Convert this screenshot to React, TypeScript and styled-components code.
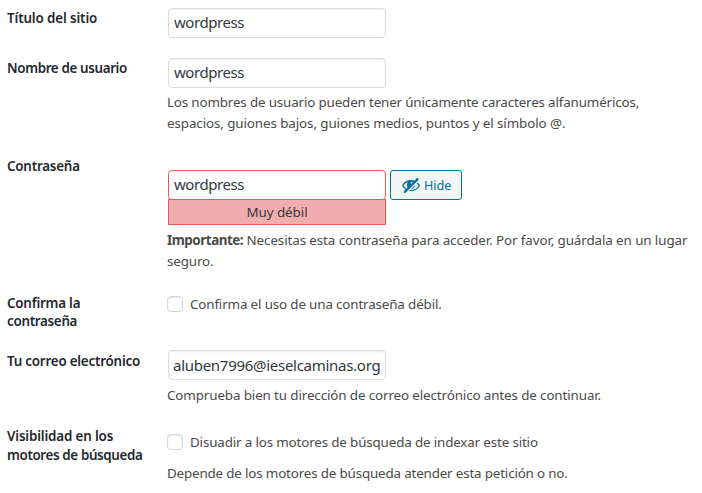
import React from "react";
import styled, { createGlobalStyle } from "styled-components";

const GlobalStyle = createGlobalStyle`
  * { box-sizing: border-box; }
  body {
    margin: 0;
    background: #fff;
    color: #4a4a4a;
    font: 13.4px/21px "Noto Sans", "Open Sans", sans-serif;
    overflow: hidden;
  }
`;

const FormTable = styled.form`
  width: 702px;
  height: 493px;
  display: grid;
  grid-template-rows: 50px 98px 137px 58px 75px 75px;
`;

const Row = styled.div`
  display: grid;
  grid-template-columns: 160px 1fr;
  padding-left: 7px;
`;

const Heading = styled.div<{ $leading?: number }>`
  padding-top: 9px;
  color: #23282d;
  font-weight: 600;
  line-height: ${(p) => p.$leading ?? 18}px;
`;

const Field = styled.div<{ $top?: number }>`
  padding-top: ${(p) => p.$top ?? 8}px;
`;

const Line = styled.div<{ $spacing?: number }>`
  letter-spacing: ${(p) => p.$spacing ?? 0}px;
  white-space: nowrap;
`;

const Spaced = styled.span<{ $spacing: number }>`
  letter-spacing: ${(p) => p.$spacing}px;
  white-space: nowrap;
`;

const Input = styled.input<{ $weak?: boolean; $spacing?: number; $inset?: number; $lift?: number }>`
  display: block;
  width: 218px;
  height: 30px;
  margin: 0 0 0 1px;
  padding: 0 0 ${(p) => p.$lift ?? 2}px ${(p) => p.$inset ?? 5}px;
  border: 1px solid ${(p) => (p.$weak ? "#e35b5b" : "#ddd")};
  border-radius: 4px;
  background: #fff;
  box-shadow: ${(p) => (p.$weak ? "none" : "inset 0 1px 2px rgba(0, 0, 0, 0.07)")};
  color: #32373c;
  font: 15px "Noto Sans", "Open Sans", sans-serif;
  letter-spacing: ${(p) => p.$spacing ?? -0.44}px;
  outline: none;
`;

const Description = styled.div<{ $gap?: number }>`
  margin-top: ${(p) => p.$gap ?? 4}px;
`;

const PasswordRow = styled.div`
  display: flex;
  gap: 4px;
`;

const Strength = styled.div`
  width: 218px;
  height: 26px;
  margin: -1px 0 0 1px;
  border: 1px solid #e35b5b;
  background: #f1adad;
  color: #32373c;
  line-height: 24px;
  text-align: center;
`;

const HideButton = styled.button`
  width: 72px;
  height: 30px;
  display: flex;
  align-items: center;
  gap: 3px;
  padding: 0 0 0 10px;
  border: 1px solid #0071a1;
  border-radius: 3px;
  background: #f3f5f6;
  color: #0071a1;
  font: 12.6px "Noto Sans", "Open Sans", sans-serif;
`;

const CheckLabel = styled.label`
  display: flex;
  align-items: center;
  height: 21px;
  gap: 7px;
`;

const CheckText = styled(Spaced)`
  padding-top: 2px;
`;

const Checkbox = styled.input`
  appearance: none;
  flex: none;
  width: 16px;
  height: 16px;
  margin: 0;
  border: 1px solid #d5d5d5;
  border-radius: 4px;
  background: #fff;
  box-shadow: inset 0 1px 2px rgba(0, 0, 0, 0.1);
`;

const HiddenIcon = () => (
  <svg width="20" height="20" viewBox="0 0 20 20" fill="currentColor" aria-hidden="true">
    <path d="M17.2 3.3l.16.17c.39.39.39 1.02 0 1.41L4.55 17.7c-.39.39-1.03.39-1.41 0l-.17-.17c-.39-.39-.39-1.02 0-1.41l1.59-1.6c-1.57-1-2.76-2.3-3.56-3.93.81-1.65 2.03-2.98 3.64-3.99S8.04 5.09 10 5.09c1.2 0 2.33.21 3.4.6l2.38-2.39c.39-.39 1.03-.39 1.42 0zm-7.09 4.01c-.23.25-.34.54-.34.88 0 .31.12.58.31.81l1.8-1.79c-.13-.12-.28-.21-.45-.26-.11-.01-.28-.03-.49-.04-.33.03-.6.16-.83.4zM2.4 10.59c.69 1.23 1.71 2.25 3.05 3.05l1.28-1.28c-.51-.69-.77-1.47-.77-2.36 0-1.06.36-1.98 1.09-2.76-1.04.27-1.96.7-2.76 1.26-.8.58-1.43 1.27-1.89 2.09zm13.22-2.13l.96-.96c1.02.86 1.83 1.89 2.42 3.09-.81 1.65-2.03 2.98-3.64 3.99s-3.4 1.51-5.36 1.51c-.63 0-1.24-.07-1.83-.18l1.07-1.07c.25.02.5.05.76.05 1.63 0 3.13-.4 4.5-1.21s2.4-1.84 3.1-3.1c-.46-.82-1.09-1.51-1.89-2.09-.03-.01-.06-.02-.09-.03zm-5.58 5.58l4-4c-.01 1.1-.41 2.04-1.18 2.81-.78.78-1.72 1.18-2.82 1.19z" />
  </svg>
);

export default function App() {
  return (
    <>
      <GlobalStyle />
      <FormTable>
        <Row>
          <Heading><Line $spacing={-0.13}>Título del sitio</Line></Heading>
          <Field><Input defaultValue="wordpress" /></Field>
        </Row>
        <Row>
          <Heading><Line $spacing={-0.36}>Nombre de usuario</Line></Heading>
          <Field>
            <Input defaultValue="wordpress" />
            <Description>
              <Line $spacing={-0.16}>Los nombres de usuario pueden tener únicamente caracteres alfanuméricos,</Line>
              <Line $spacing={-0.1}>espacios, guiones bajos, guiones medios, puntos y el símbolo @.</Line>
            </Description>
          </Field>
        </Row>
        <Row>
          <Heading><Line $spacing={-0.22}>Contraseña</Line></Heading>
          <Field $top={22}>
            <PasswordRow>
              <Input $weak defaultValue="wordpress" />
              <HideButton type="button"><HiddenIcon />Hide</HideButton>
            </PasswordRow>
            <Strength><Spaced $spacing={-0.05}>Muy débil</Spaced></Strength>
            <Description $gap={5}>
              <Line>
                <Spaced as="strong" $spacing={-0.46}>Importante:</Spaced>
                <Spaced $spacing={-0.1}> Necesitas esta contraseña para acceder. Por favor, guárdala en un lugar</Spaced>
              </Line>
              <Line $spacing={-0.15}>seguro.</Line>
            </Description>
          </Field>
        </Row>
        <Row>
          <Heading>
            <Line $spacing={-0.22}>Confirma la</Line>
            <Line $spacing={-0.3}>contraseña</Line>
          </Heading>
          <Field>
            <CheckLabel>
              <Checkbox type="checkbox" />
              <CheckText $spacing={-0.15}>Confirma el uso de una contraseña débil.</CheckText>
            </CheckLabel>
          </Field>
        </Row>
        <Row>
          <Heading><Line $spacing={-0.22}>Tu correo electrónico</Line></Heading>
          <Field $top={7}>
            <Input defaultValue="aluben7996@ieselcaminas.org" $spacing={-0.28} $inset={4} $lift={0} />
            <Description $gap={5}>
              <Line $spacing={-0.12}>Comprueba bien tu dirección de correo electrónico antes de continuar.</Line>
            </Description>
          </Field>
        </Row>
        <Row>
          <Heading $leading={19}>
            <Line $spacing={-0.16}>Visibilidad en los</Line>
            <Line $spacing={-0.37}>motores de búsqueda</Line>
          </Heading>
          <Field $top={13}>
            <CheckLabel>
              <Checkbox type="checkbox" />
              <CheckText $spacing={-0.155}>Disuadir a los motores de búsqueda de indexar este sitio</CheckText>
            </CheckLabel>
            <Description $gap={11}>
              <Line $spacing={-0.17}>Depende de los motores de búsqueda atender esta petición o no.</Line>
            </Description>
          </Field>
        </Row>
      </FormTable>
    </>
  );
}
